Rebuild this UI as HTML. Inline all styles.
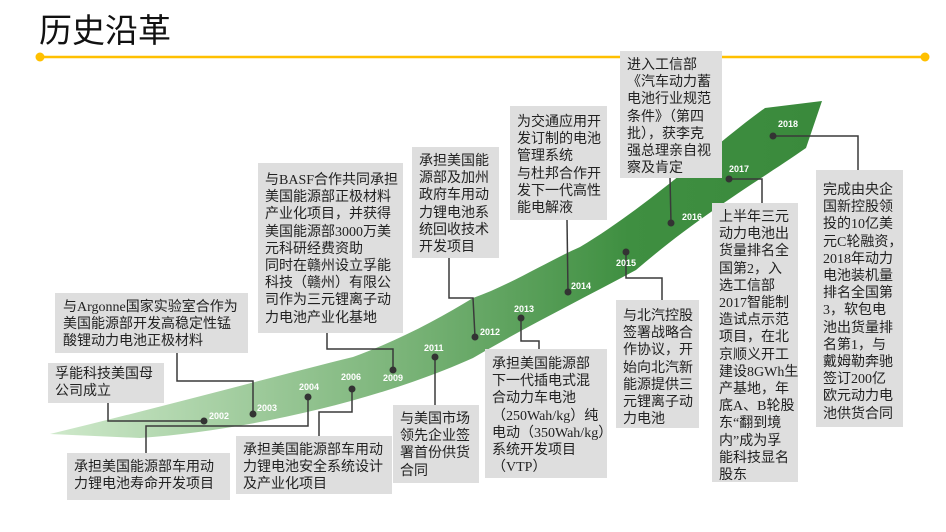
<!DOCTYPE html>
<html><head><meta charset="utf-8"><style>
body{margin:0;width:946px;height:532px;background:#fff;position:relative;overflow:hidden;font-family:"Liberation Serif","Noto Sans CJK SC",sans-serif;}
.t{position:absolute;left:39px;top:4px;font-family:"Liberation Sans","Noto Sans CJK SC",sans-serif;font-size:33px;color:#111;}
.b{position:absolute;background:#dedede;color:#222;font-size:14px;line-height:17.2px;white-space:nowrap;box-sizing:border-box;padding:7px 0 0 7px;}
svg{position:absolute;left:0;top:0}
.y{font-family:"Liberation Sans",sans-serif;font-weight:bold;font-size:9px;fill:#fff}
</style></head><body>
<div class="t">历史沿革</div>
<svg width="946" height="532">
<defs><linearGradient id="g" x1="50" y1="0" x2="820" y2="0" gradientUnits="userSpaceOnUse">
<stop offset="0" stop-color="#cfe9cb"/><stop offset="0.45" stop-color="#7cb57a"/><stop offset="0.75" stop-color="#3f8f41"/><stop offset="1" stop-color="#3a8a3c"/></linearGradient></defs>
<line x1="40" y1="57" x2="925" y2="57" stroke="#ffc000" stroke-width="2.5"/>
<circle cx="40" cy="57" r="4.5" fill="#ffc000"/><circle cx="925" cy="57" r="4.5" fill="#ffc000"/>
<path d="M50,434 C150,410 260,380 353,357 C400,340 440,318 473,298 C510,285 550,260 580,247 C650,205 720,140 765,108 L822,101 L806,148 C760,180 700,215 636,270 C580,300 520,330 473,358 C380,400 250,430 140,438 Z" fill="url(#g)"/>
<g stroke="#3a3a3a" stroke-width="1.5" fill="none">
<polyline points="108,403 108,421 204,421"/>
<polyline points="177,353 177,381 253,381 253,414"/>
<polyline points="308,397 308,426 146,426 146,453"/>
<polyline points="352,389 352,412 319,412 319,436"/>
<polyline points="327,333 327,349 393,349 393,370"/>
<polyline points="435,357 435,405"/>
<polyline points="449,258 449,298 473,298 475,337"/>
<polyline points="521,318 521,341 539,341 539,349"/>
<polyline points="567,220 568,292"/>
<polyline points="626,252 626,278 662,278 662,300"/>
<polyline points="670,178 671,223"/>
<polyline points="729,179 762,179 762,203"/>
<polyline points="773,136 858,136 858,170"/>
</g>
<g fill="#333">
<circle cx="204" cy="421" r="3.5"/><circle cx="253" cy="414" r="3.5"/><circle cx="308" cy="397" r="3.5"/><circle cx="352" cy="389" r="3.5"/><circle cx="393" cy="370" r="3.5"/><circle cx="435" cy="357" r="3.5"/><circle cx="475" cy="337" r="3.5"/><circle cx="521" cy="318" r="3.5"/><circle cx="568" cy="292" r="3.5"/><circle cx="626" cy="252" r="3.5"/><circle cx="671" cy="223" r="3.5"/><circle cx="729" cy="179" r="3.5"/><circle cx="773" cy="136" r="3.5"/>
</g>
<g class="y">
<text x="209" y="419">2002</text><text x="257" y="411">2003</text><text x="299" y="390">2004</text><text x="341" y="380">2006</text><text x="383" y="381">2009</text><text x="424" y="351">2011</text><text x="480" y="335">2012</text><text x="514" y="312">2013</text><text x="571" y="289">2014</text><text x="616" y="266">2015</text><text x="682" y="220">2016</text><text x="729" y="172">2017</text><text x="778" y="127">2018</text>
</g>
</svg>
<div class="b" style="left:48px;top:363px;width:116px;height:40px;padding-top:3px">孚能科技美国母<br>公司成立</div>
<div class="b" style="left:55px;top:293px;width:193px;height:60px;padding-top:6px;padding-left:8px">与Argonne国家实验室合作为<br>美国能源部开发高稳定性锰<br>酸锂动力电池正极材料</div>
<div class="b" style="left:258px;top:163px;width:145px;height:170px;padding-top:9px">与BASF合作共同承担<br>美国能源部正极材料<br>产业化项目，并获得<br>美国能源部3000万美<br>元科研经费资助<br>同时在赣州设立孚能<br>科技（赣州）有限公<br>司作为三元锂离子动<br>力电池产业化基地</div>
<div class="b" style="left:412px;top:147px;width:87px;height:111px;padding-top:6px">承担美国能<br>源部及加州<br>政府车用动<br>力锂电池系<br>统回收技术<br>开发项目</div>
<div class="b" style="left:510px;top:106px;width:97px;height:114px;padding-top:8px">为交通应用开<br>发订制的电池<br>管理系统<br>与杜邦合作开<br>发下一代高性<br>能电解液</div>
<div class="b" style="left:620px;top:51px;width:102px;height:127px;padding-top:6px">进入工信部<br>《汽车动力蓄<br>电池行业规范<br>条件》（第四<br>批），获李克<br>强总理亲自视<br>察及肯定</div>
<div class="b" style="left:712px;top:203px;width:86px;height:279px;padding-top:6px">上半年三元<br>动力电池出<br>货量排名全<br>国第2，入<br>选工信部<br>2017智能制<br>造试点示范<br>项目，在北<br>京顺义开工<br>建设8GWh生<br>产基地，年<br>底A、B轮股<br>东“翻到境<br>内”成为孚<br>能科技显名<br>股东</div>
<div class="b" style="left:816px;top:170px;width:87px;height:257px;padding-top:12px">完成由央企<br>国新控股领<br>投的10亿美<br>元C轮融资，<br>2018年动力<br>电池装机量<br>排名全国第<br>3，软包电<br>池出货量排<br>名第1，与<br>戴姆勒奔驰<br>签订200亿<br>欧元动力电<br>池供货合同</div>
<div class="b" style="left:616px;top:300px;width:83px;height:128px;padding-top:8px">与北汽控股<br>签署战略合<br>作协议，开<br>始向北汽新<br>能源提供三<br>元锂离子动<br>力电池</div>
<div class="b" style="left:485px;top:349px;width:122px;height:129px;padding-top:7px">承担美国能源部<br>下一代插电式混<br>合动力车电池<br>（250Wah/kg）纯<br>电动（350Wah/kg）<br>系统开发项目<br>（VTP）</div>
<div class="b" style="left:393px;top:405px;width:86px;height:78px;padding-top:6px">与美国市场<br>领先企业签<br>署首份供货<br>合同</div>
<div class="b" style="left:236px;top:436px;width:156px;height:58px;padding-top:6px">承担美国能源部车用动<br>力锂电池安全系统设计<br>及产业化项目</div>
<div class="b" style="left:67px;top:453px;width:163px;height:47px;padding-top:6px">承担美国能源部车用动<br>力锂电池寿命开发项目</div>
</body></html>
